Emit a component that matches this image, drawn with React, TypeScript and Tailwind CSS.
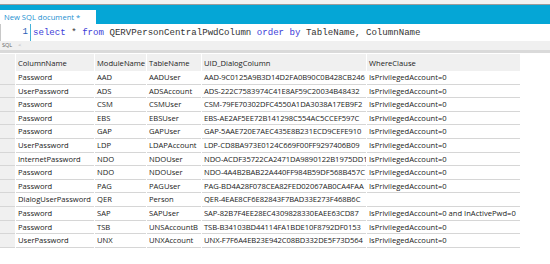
const rows: string[][] = [
  ["Password", "AAD", "AADUser", "AAD-9C0125A9B3D14D2FA0B90C0B428CB246", "IsPrivilegedAccount=0"],
  ["UserPassword", "ADS", "ADSAccount", "ADS-222C7583974C41E8AF59C20034B48432", "IsPrivilegedAccount=0"],
  ["Password", "CSM", "CSMUser", "CSM-79FE70302DFC4550A1DA3038A17EB9F2", "IsPrivilegedAccount=0"],
  ["Password", "EBS", "EBSUser", "EBS-AE2AF5EE72B141298C554AC5CCEF597C", "IsPrivilegedAccount=0"],
  ["Password", "GAP", "GAPUser", "GAP-5AAE720E7AEC435E8B231ECD9CEFE910", "IsPrivilegedAccount=0"],
  ["UserPassword", "LDP", "LDAPAccount", "LDP-CD8BA973E0124C669F00FF9297406B09", "IsPrivilegedAccount=0"],
  ["InternetPassword", "NDO", "NDOUser", "NDO-ACDF35722CA2471DA9890122B1975DD1", "IsPrivilegedAccount=0"],
  ["Password", "NDO", "NDOUser", "NDO-4A4B2BAB22A440FF984B59DF568B457C", "IsPrivilegedAccount=0"],
  ["Password", "PAG", "PAGUser", "PAG-BD4A28F078CEA82FED02067AB0CA4FAA", "IsPrivilegedAccount=0"],
  ["DialogUserPassword", "QER", "Person", "QER-4EAE8CF6E82843F7BAD33E273F468B6C", ""],
  ["Password", "SAP", "SAPUser", "SAP-82B7F4EE28EC4309828330EAEE63CD87", "IsPrivilegedAccount=0 and InActivePwd=0"],
  ["Password", "TSB", "UNSAccountB", "TSB-B34103BD44114FA1BDE10F8792DF0153", "IsPrivilegedAccount=0"],
  ["UserPassword", "UNX", "UNXAccount", "UNX-F7F6A4EB23E942C08BD332DE5F73D564", "IsPrivilegedAccount=0"],
];

const headers = ["ColumnName", "ModuleName", "TableName", "UID_DialogColumn", "WhereClause"];
const widths = ["w-[78px]", "w-[51px]", "w-[54px]", "w-[164px]", "w-[153px]"];

export default function App() {
  return (
    <div className="w-[550px] h-[264px] overflow-hidden bg-white font-['Open_Sans',sans-serif] text-[#1a1a1a]">
      <div className="h-[5px] bg-[#f2f2f2] border-b border-[#9c9c9c]" />
      <div className="h-[19px] bg-[#05a6d6] flex items-end">
        <div className="w-[96px] h-[14px] bg-white pl-[4px] text-[7.6px] leading-[14px] text-[#1b8fd0]">
          New SQL document *
        </div>
      </div>

      {/* editor */}
      <div className="h-[17px] flex border-l border-[#c8c8c8]">
        <div className="w-[29px] pr-[2px] text-right font-['Liberation_Mono',monospace] text-[9px] leading-[17px] text-[#2b5fb8]">
          1
        </div>
        <div className="w-px bg-[#45b3d8]" />
        <div className="pl-[2px] font-['Liberation_Mono',monospace] text-[9.1px] leading-[17px] whitespace-pre text-[#333]">
          <span className="text-[#3c3cd8]">select</span> * <span className="text-[#3c3cd8]">from</span> QERVPersonCentralPwdColumn{" "}
          <span className="text-[#3c3cd8]">order by</span> TableName, ColumnName
        </div>
      </div>

      <div className="h-[9px] bg-[#f0f0f0] flex items-center gap-[6px] pl-[2px] text-[5.5px] leading-none text-[#666]">
        <span>SQL</span>
        <span className="text-[#aaa]">&lt;</span>
      </div>
      <div className="h-[3px] bg-[#dadada]" />

      {/* grid */}
      <div className="w-[520px] pt-[1px] text-[7.6px]">
        <div className="flex h-[17px] gap-px">
          <div className="w-[15px] bg-[#f0f0f0]" />
          {headers.map((h, i) => (
            <div key={h} className={`${widths[i]} bg-[#f0f0f0] pl-[2px] leading-[18px] whitespace-nowrap overflow-hidden`}>
              {h}
            </div>
          ))}
        </div>
        {rows.map((r, ri) => (
          <div key={ri} className="flex h-[13.6px] gap-px">
            <div className="w-[15px] bg-[#f0f0f0] border-b border-[#d6d6d6]" />
            {r.map((c, ci) => (
              <div
                key={ci}
                className={`${widths[ci]} border-b border-[#d6d6d6] pl-[2px] leading-[13px] whitespace-nowrap overflow-hidden ${
                  ci === 3 ? "tracking-[-0.06px]" : ""
                }`}
              >
                {c}
              </div>
            ))}
          </div>
        ))}
      </div>
    </div>
  );
}
